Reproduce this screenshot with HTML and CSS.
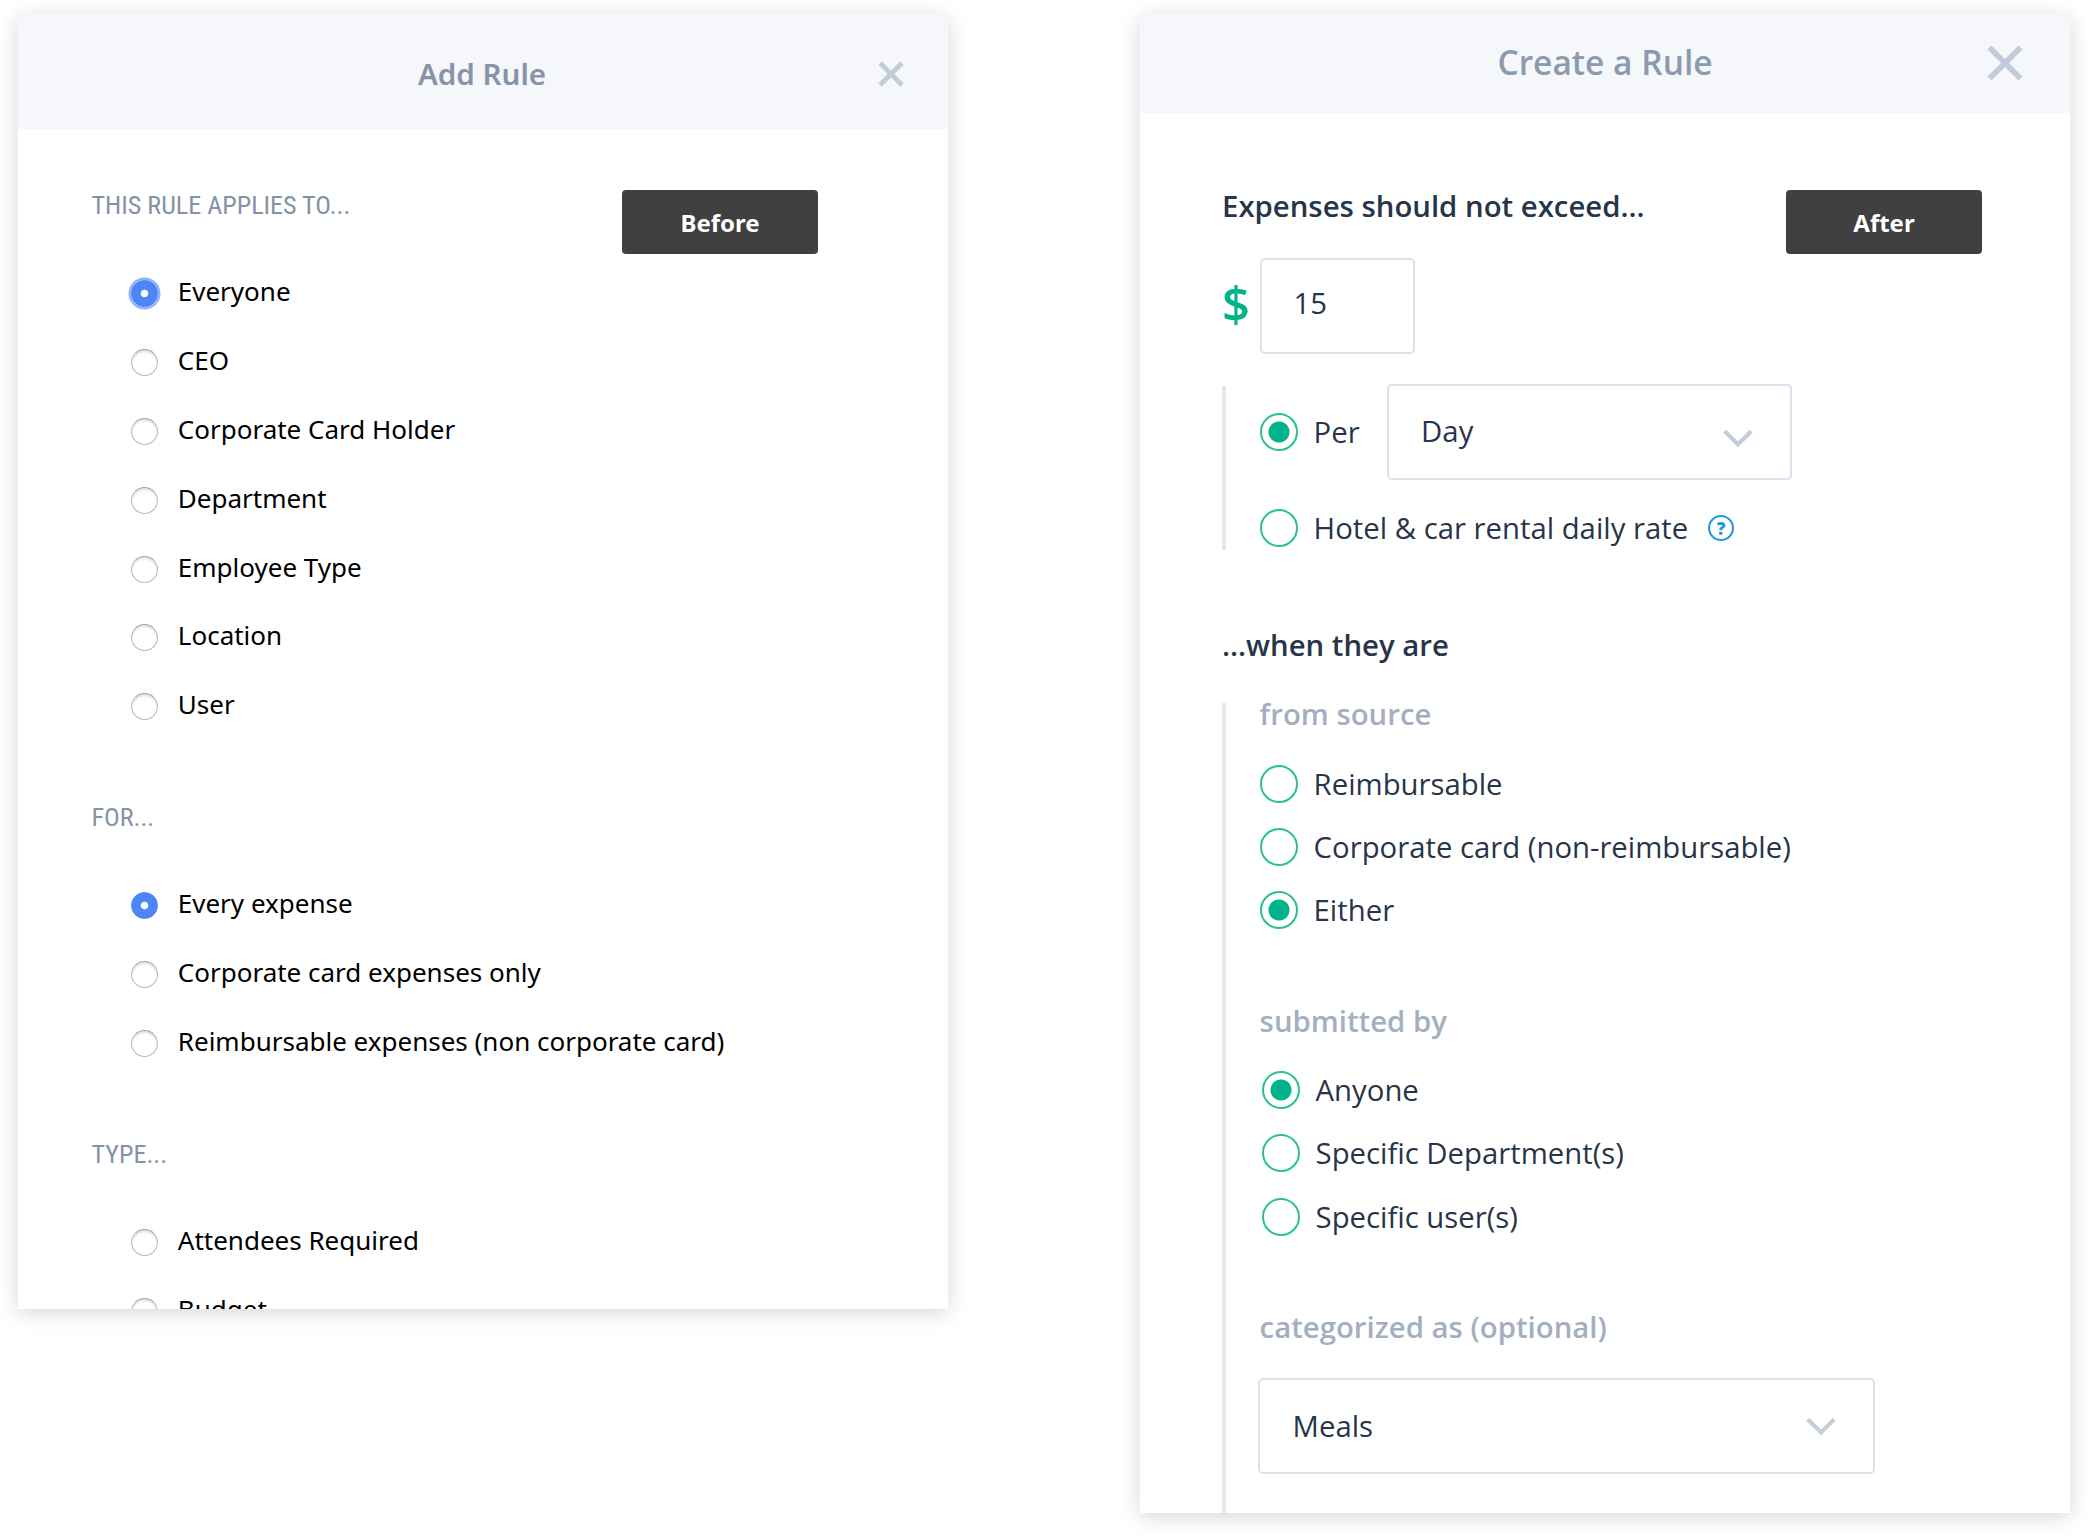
FILE: index.html
```html
<!DOCTYPE html>
<html lang="en">
<head>
<meta charset="utf-8">
<title>Rule dialogs</title>
<link rel="stylesheet" href="styles.css">
</head>
<body>
<main class="compare">
  <section class="card before">
    <header class="card-head">
      <h1>Add Rule</h1>
      <svg class="close" viewBox="0 0 26 26"><path d="M2 2 24 24M24 2 2 24"/></svg>
    </header>
    <span class="tag">Before</span>
    <div class="body">
      <h2>THIS RULE APPLIES TO...</h2>
      <div class="options">
        <label><input type="radio" name="who" class="focused" checked>Everyone</label>
        <label><input type="radio" name="who">CEO</label>
        <label><input type="radio" name="who">Corporate Card Holder</label>
        <label><input type="radio" name="who">Department</label>
        <label><input type="radio" name="who">Employee Type</label>
        <label><input type="radio" name="who">Location</label>
        <label><input type="radio" name="who">User</label>
      </div>
      <h2>FOR...</h2>
      <div class="options">
        <label><input type="radio" name="for" checked>Every expense</label>
        <label><input type="radio" name="for">Corporate card expenses only</label>
        <label><input type="radio" name="for">Reimbursable expenses (non corporate card)</label>
      </div>
      <h2>TYPE...</h2>
      <div class="options">
        <label><input type="radio" name="type">Attendees Required</label>
        <label><input type="radio" name="type">Budget</label>
      </div>
    </div>
  </section>

  <section class="card after">
    <header class="card-head">
      <h1>Create a Rule</h1>
      <svg class="close" viewBox="0 0 36 36"><path d="M2.5 2.5 33.5 33.5M33.5 2.5 2.5 33.5"/></svg>
    </header>
    <span class="tag">After</span>
    <div class="body">
      <h2>Expenses should not exceed...</h2>
      <div class="amount">
        <span class="currency">$</span>
        <span class="field">15</span>
      </div>
      <div class="group limit">
        <div class="per">
          <label><input type="radio" name="limit" checked>Per</label>
          <div class="field select">Day
            <svg class="chevron low" viewBox="0 0 30 20"><path d="M1.8 3.2 15 16.4 28.2 3.2"/></svg>
          </div>
        </div>
        <div class="rate">
          <label><input type="radio" name="limit">Hotel &amp; car rental daily rate</label>
          <span class="help">?</span>
        </div>
      </div>
      <h2 class="when">...when they are</h2>
      <div class="group filters">
        <h3>from source</h3>
        <div class="options">
          <label><input type="radio" name="source">Reimbursable</label>
          <label><input type="radio" name="source">Corporate card (non-reimbursable)</label>
          <label><input type="radio" name="source" checked>Either</label>
        </div>
        <h3>submitted by</h3>
        <div class="options shifted">
          <label><input type="radio" name="by" checked>Anyone</label>
          <label><input type="radio" name="by">Specific Department(s)</label>
          <label><input type="radio" name="by">Specific user(s)</label>
        </div>
        <h3>categorized as (optional)</h3>
        <div class="field select category">Meals
          <svg class="chevron" viewBox="0 0 30 20"><path d="M1.8 3.2 15 16.4 28.2 3.2"/></svg>
        </div>
      </div>
    </div>
  </section>
</main>
</body>
</html>
```
FILE: styles.css
```css
* { box-sizing: border-box; }
body { margin: 0; min-height: 1536px; background: #fff; font-family: "Noto Sans", "Open Sans", sans-serif; }
h1, h2, h3 { margin: 0; }

.compare { display: flex; align-items: flex-start; gap: 192px; padding: 14px 18px 23px; }
.card {
  position: relative;
  display: flex;
  flex-direction: column;
  flex: none;
  width: 930px;
  background: #fff;
  overflow: hidden;
  box-shadow: 0 4px 20px rgba(0, 0, 0, .16);
}
.before { height: 1295px; }
.after { height: 1499px; font-family: "Open Sans", "Noto Sans", sans-serif; }

.card-head {
  flex: none;
  display: grid;
  grid-template-columns: 1fr auto 1fr;
  align-items: center;
  background: #f5f7fb;
}
.card-head h1 { grid-column: 2; color: #8793a8; font-weight: 600; }
.close { justify-self: end; fill: none; stroke: #c0ccda; }
.before .card-head { height: 115px; padding: 4px 44px 0 42px; }
.before h1 { font-size: 29.6px; line-height: 40px; }
.before .close { width: 26px; height: 26px; stroke-width: 4.6; margin-top: 1px; }
.after .card-head { height: 99px; padding: 0 47px 3px; }
.after h1 { font-size: 33.5px; line-height: 44px; color: #8a9bb0; }
.after .close { width: 36px; height: 36px; stroke-width: 5.6; margin-top: 1px; }

.tag {
  position: absolute;
  top: 176px;
  width: 196px;
  height: 64px;
  border-radius: 4px;
  background: #404040;
  color: #fff;
  font: 700 24px/66px "Noto Sans", sans-serif;
  text-align: center;
}
.before .tag { left: 604px; }
.after .tag { left: 646px; }

input {
  appearance: none;
  flex: none;
  margin: 0;
  border-radius: 50%;
}
label { display: flex; align-items: center; white-space: nowrap; }

/* Add Rule */
.before .body { padding: 57.6px 74px 0 73.5px; }
.before h2 {
  color: #8492a6;
  font: 400 26.1px/36px "Roboto Condensed", Roboto, sans-serif;
}
.before .options { padding: 34px 0 60px 39.5px; }
.before .options label { height: 68.9px; gap: 19.8px; font-size: 26px; color: #000; }
.before input {
  width: 27px;
  height: 27px;
  margin-top: 5px;
  border: 1.5px solid #b9b9b9;
  border-top-color: #a2a2a2;
  background: #fff;
  box-shadow: inset 0 2px 2px rgba(0, 0, 0, .12);
}
.before input:checked {
  border: 1px solid #4680f6;
  background: radial-gradient(circle, #fff 3.3px, #4d86f7 4.2px);
  box-shadow: none;
}
.before input.focused:checked { border-color: #3b77f3; box-shadow: 0 0 0 2.5px #8fb2fa; }

/* Create a Rule */
.after .body {
  flex: 1;
  display: flex;
  flex-direction: column;
  padding: 73.4px 82px 0;
  color: #283549;
  font-size: 29.3px;
}
.after h2, .after h3 { font-size: 29.35px; font-weight: 600; line-height: 40px; }
.after h3 { color: #a3afc0; }
.amount { display: flex; align-items: center; margin-top: 31.2px; }
.currency { width: 38px; color: #00b388; font-size: 49px; font-weight: 600; line-height: 90px; margin-top: -6px; }
.field {
  display: flex;
  align-items: center;
  height: 96px;
  padding: 0 0 5px 31.5px;
  border: 2px solid #dae2eb;
  border-radius: 5px;
}
.amount .field { width: 155px; }
.select { justify-content: space-between; padding: 0 37px 0 32px; }
.chevron { width: 30px; height: 20px; fill: none; stroke: #c3cedc; stroke-width: 4.2; }
.low { margin-top: 13px; }
.group { border-left: 4px solid #e2e8f0; padding-left: 33.6px; }
.limit { height: 164px; margin-top: 32px; }
.per { display: flex; align-items: center; justify-content: space-between; width: 532.5px; margin-top: -2px; }
.per .select { width: 405px; padding-bottom: 1px; }
.rate { display: flex; align-items: center; gap: 20px; height: 44px; margin-top: 26px; }
.help {
  display: grid;
  place-items: center;
  width: 26px;
  height: 26px;
  margin-top: 1px;
  border: 2.6px solid #1e98e0;
  border-radius: 50%;
  color: #1e98e0;
  font-size: 17px;
  font-weight: 800;
  line-height: 17px;
}
.when { margin-top: 75px; }
.filters { flex: 1; margin-top: 38.4px; }
.filters h3:first-child { margin-top: -9px; }
.after .options { padding: 18.2px 0 59.8px; }
.after .shifted { padding: 17.6px 0 59.2px 2px; }
.after label { gap: 16px; }
.after .options label { height: 63.1px; }
.after input {
  width: 38px;
  height: 38px;
  border: 2.4px solid #2bbf98;
}
.after input:checked { background: radial-gradient(circle, #00b388 10px, transparent 11px); }
.category { width: 617px; margin: 31px 0 0 -2px; padding: 0 37px 1px 33px; }
```
